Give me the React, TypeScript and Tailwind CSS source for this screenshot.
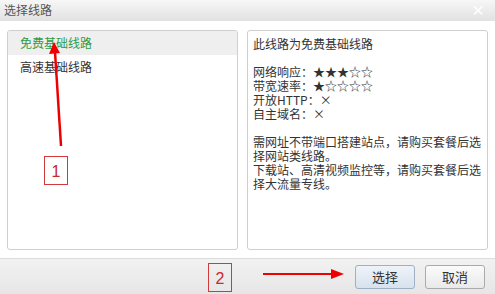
import React from "react";

const lines = [
  "此线路为免费基础线路",
  "",
  "网络响应：★★★☆☆",
  "带宽速率：★☆☆☆☆",
  "开放HTTP：×",
  "自主域名：×",
  "",
  "需网址不带端口搭建站点，请购买套餐后选",
  "择网站类线路。",
  "下载站、高清视频监控等，请购买套餐后选",
  "择大流量专线。",
];

const App = () => {
  return (
    <div
      className="relative w-[495px] h-[294px] overflow-hidden bg-white text-[12px] text-[#333]"
      style={{ fontFamily: '"Noto Sans CJK SC", "Liberation Sans", sans-serif' }}
    >
      {/* title bar */}
      <div className="h-[21px] flex items-center justify-between pl-[4px] pr-[10px] bg-gradient-to-b from-[#f7f7f7] to-[#e1e1e1]">
        <span className="text-[12px] text-[#555] leading-none -mt-[2px]">选择线路</span>
        <span className="text-white text-[14px] leading-[14px] font-bold -mt-[3px]">×</span>
      </div>

      {/* body */}
      <div className="h-[237px] flex gap-[9px] pt-[9px] pb-[8px] pl-[7px] pr-[7px]">
        <div className="w-[231px] border border-[#cfcfcf] rounded-[3px] overflow-hidden">
          <div className="h-[24px] flex items-center pl-[12px] bg-[#efefef] text-[#2f9a45]">
            免费基础线路
          </div>
          <div className="h-[24px] flex items-center pl-[12px] text-[#333]">
            高速基础线路
          </div>
        </div>
        <div className="flex-1 border border-[#cfcfcf] rounded-[3px] pt-[6px] pl-[5px]">
          {lines.map((line, i) => (
            <div key={i} className="h-[14px] leading-[14px] whitespace-nowrap">
              {line}
            </div>
          ))}
        </div>
      </div>

      {/* footer */}
      <div className="h-[36px] border-t border-[#dcdcdc] bg-gradient-to-b from-[#f2f2f2] to-[#e6e6e6] flex items-center justify-end gap-[10px] pr-[10px]">
        <button className="w-[60px] h-[24px] rounded-[3px] border border-[#9eb0c4] bg-gradient-to-b from-[#eef3f9] to-[#d7e2ee] text-[13px] text-[#333]">
          选择
        </button>
        <button className="w-[60px] h-[24px] rounded-[3px] border border-[#aaaaaa] bg-gradient-to-b from-[#fbfbfb] to-[#e9e9e9] text-[13px] text-[#333]">
          取消
        </button>
      </div>

      {/* annotations */}
      <svg className="absolute left-0 top-0 pointer-events-none" width="495" height="294">
        <line x1="61" y1="146" x2="55" y2="52" stroke="#e00" strokeWidth="2.5" />
        <polygon points="54,42 49,54 60,53" fill="#e00" />
        <rect x="44.5" y="156.5" width="23" height="28" fill="none" stroke="#d23a3a" strokeWidth="1" />
        <text x="56" y="177" textAnchor="middle" fontSize="16" fill="#c8282f" fontFamily="Liberation Sans, sans-serif">1</text>
        <rect x="208.5" y="263.5" width="23" height="28" fill="none" stroke="#d23a3a" strokeWidth="1" />
        <text x="220" y="284" textAnchor="middle" fontSize="16" fill="#c8282f" fontFamily="Liberation Sans, sans-serif">2</text>
        <line x1="263" y1="274" x2="334" y2="274" stroke="#e00" strokeWidth="2" />
        <polygon points="344,274 331,269 331,279" fill="#e00" />
      </svg>
    </div>
  );
};

export default App;
